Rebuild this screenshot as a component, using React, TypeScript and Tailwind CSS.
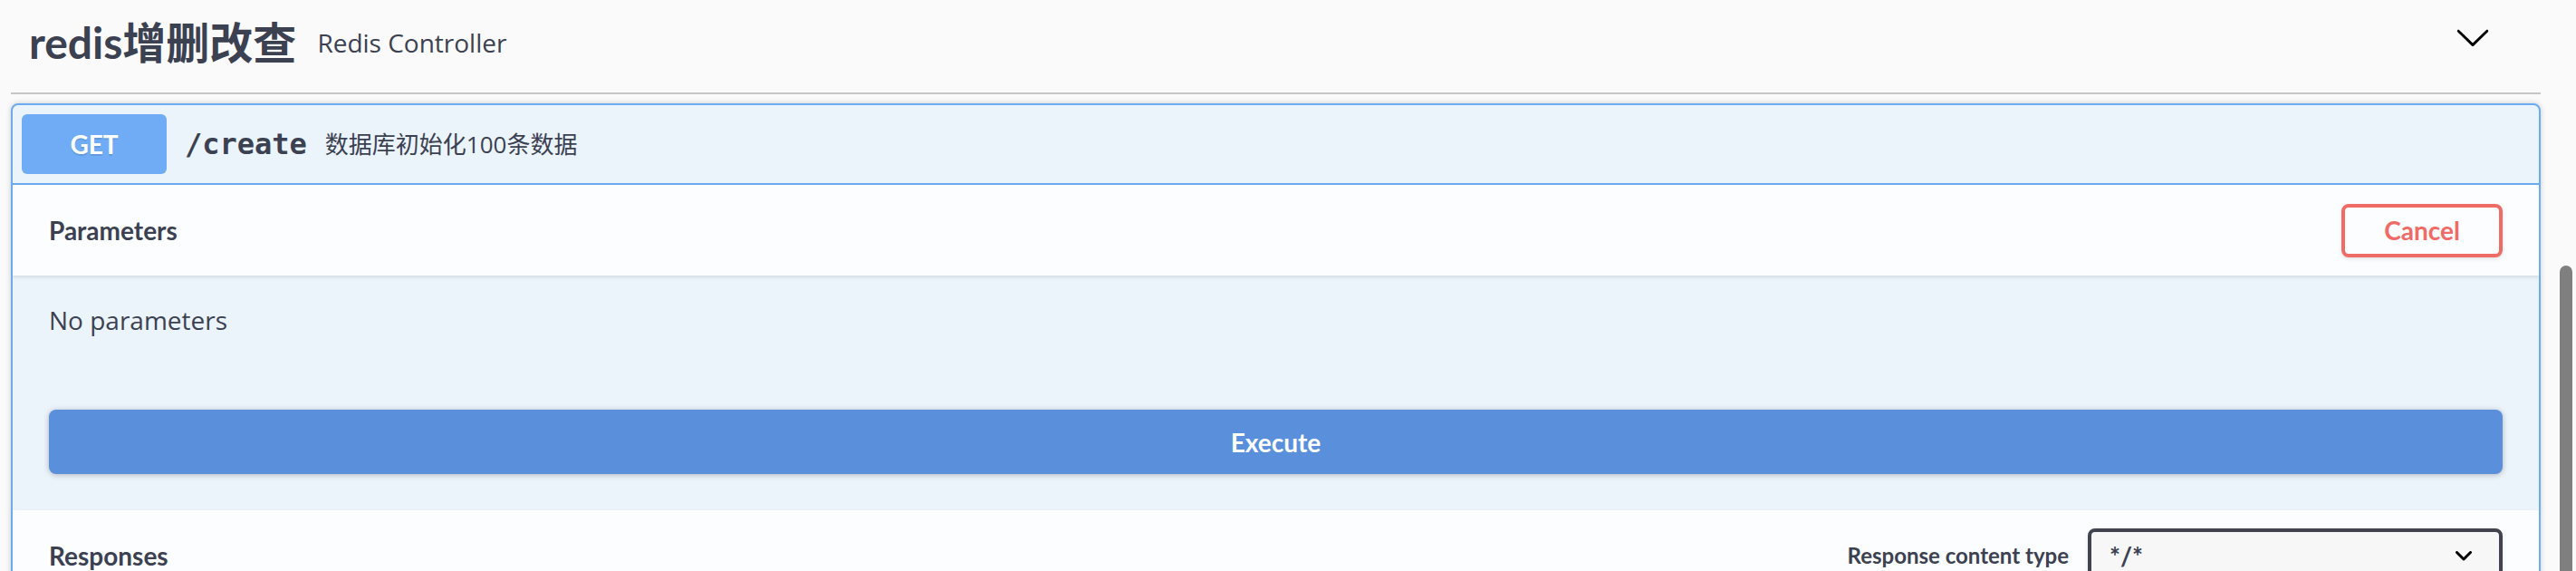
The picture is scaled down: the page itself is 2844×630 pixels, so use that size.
import React from 'react';

const heading = "font-['Lato','Noto_Sans_CJK_SC',sans-serif]";
const body = "font-['Open_Sans','Noto_Sans_CJK_SC',sans-serif]";

function Chevron() {
  return (
    <svg viewBox="0 0 20 20" className="w-[40px] h-[40px] mb-[11px] mr-[55px]">
      <path
        fill="#000"
        d="M17.418 6.109c.272-.268.709-.268.979 0s.271.701 0 .969l-7.908 7.83c-.27.268-.707.268-.979 0l-7.908-7.83c-.27-.268-.27-.701 0-.969.271-.268.709-.268.979 0L10 13.25l7.418-7.141z"
      />
    </svg>
  );
}

function SectionHeader({ title, children }: { title: string; children?: React.ReactNode }) {
  return (
    <div className="flex items-center justify-between h-[100px] px-[40px] bg-white/80 shadow-[0_2px_4px_rgba(0,0,0,0.1)] relative">
      <h4 className={`${heading} text-[28px] font-bold leading-none text-[#3b4151]`}>{title}</h4>
      {children}
    </div>
  );
}

export default function App() {
  return (
    <div className="relative h-[630px] overflow-hidden bg-[#fafafa] text-[#3b4151]">
      <div className="ml-[12px] w-[2793px]">
        {/* tag header */}
        <div className="flex items-center h-[104px] pl-[20px] pb-[9px] border-b-2 border-[#c6c6c9]">
          <h4 className={`${heading} text-[48px] font-bold leading-none text-[#3b4151]`}>redis增删改查</h4>
          <small className={`${body} ml-[23px] text-[28px] leading-none text-[#3b4151]`}>Redis Controller</small>
          <div className="flex-1" />
          <Chevron />
        </div>

        {/* operation */}
        <div className="mt-[10px] border-2 border-[#6caaf3] rounded-[8px] bg-[#ebf3fb] shadow-[0_0_6px_rgba(0,0,0,0.19)] overflow-hidden">
          <div className="flex items-center p-[10px] border-b-2 border-[#6caaf3]">
            <span
              className={`${heading} flex items-center justify-center w-[160px] h-[66px] rounded-[6px] bg-[#70acf6] text-white text-[28px] font-bold leading-none [text-shadow:0_2px_0_rgba(0,0,0,0.1)]`}
            >
              GET
            </span>
            <span className="font-['DejaVu_Sans_Mono',monospace] px-[20px] text-[32px] font-semibold leading-none text-[#3b4151]">
              /create
            </span>
            <span className={`${body} text-[26px] leading-none text-[#3b4151]`}>数据库初始化100条数据</span>
          </div>

          <SectionHeader title="Parameters">
            <button
              className={`${heading} w-[178px] h-[59px] border-4 border-[#ee6b66] rounded-[8px] text-[#ee6b66] text-[28px] font-bold leading-none bg-transparent shadow-[0_2px_4px_rgba(0,0,0,0.1)]`}
            >
              Cancel
            </button>
          </SectionHeader>

          <div className="px-[40px] pt-[30px] pb-[40px]">
            <p className={`${body} text-[28px] leading-[38px] text-[#3b4151]`}>No parameters</p>
            <button
              className={`${heading} mt-[80px] w-full h-[71px] rounded-[8px] bg-[#5a8fdc] text-white text-[28px] font-bold leading-none shadow-[0_1px_6px_rgba(0,0,0,0.25)]`}
            >
              Execute
            </button>
          </div>

          <SectionHeader title="Responses">
            <div className="flex items-center">
              <span className={`${heading} mr-[21px] text-[24px] font-bold leading-none text-[#3b4151]`}>
                Response content type
              </span>
              <div className="flex items-center justify-between w-[458px] h-[60px] pl-[20px] pr-[30px] border-4 border-[#41444e] rounded-[8px] bg-[#f7f7f7] shadow-[0_2px_4px_rgba(0,0,0,0.1)]">
                <span className={`${heading} text-[28px] font-bold leading-none text-[#3b4151]`}>*/*</span>
                <svg viewBox="0 0 18 11" className="w-[18px] h-[11px]">
                  <polyline points="1.5,1.5 9,9 16.5,1.5" fill="none" stroke="#000" strokeWidth="3" strokeLinecap="round" strokeLinejoin="round" />
                </svg>
              </div>
            </div>
          </SectionHeader>
        </div>
      </div>

      {/* overlay scrollbar thumb */}
      <div className="absolute right-[4px] top-[293px] w-[14px] h-[400px] rounded-full bg-[#7f7f7f]" />
    </div>
  );
}
